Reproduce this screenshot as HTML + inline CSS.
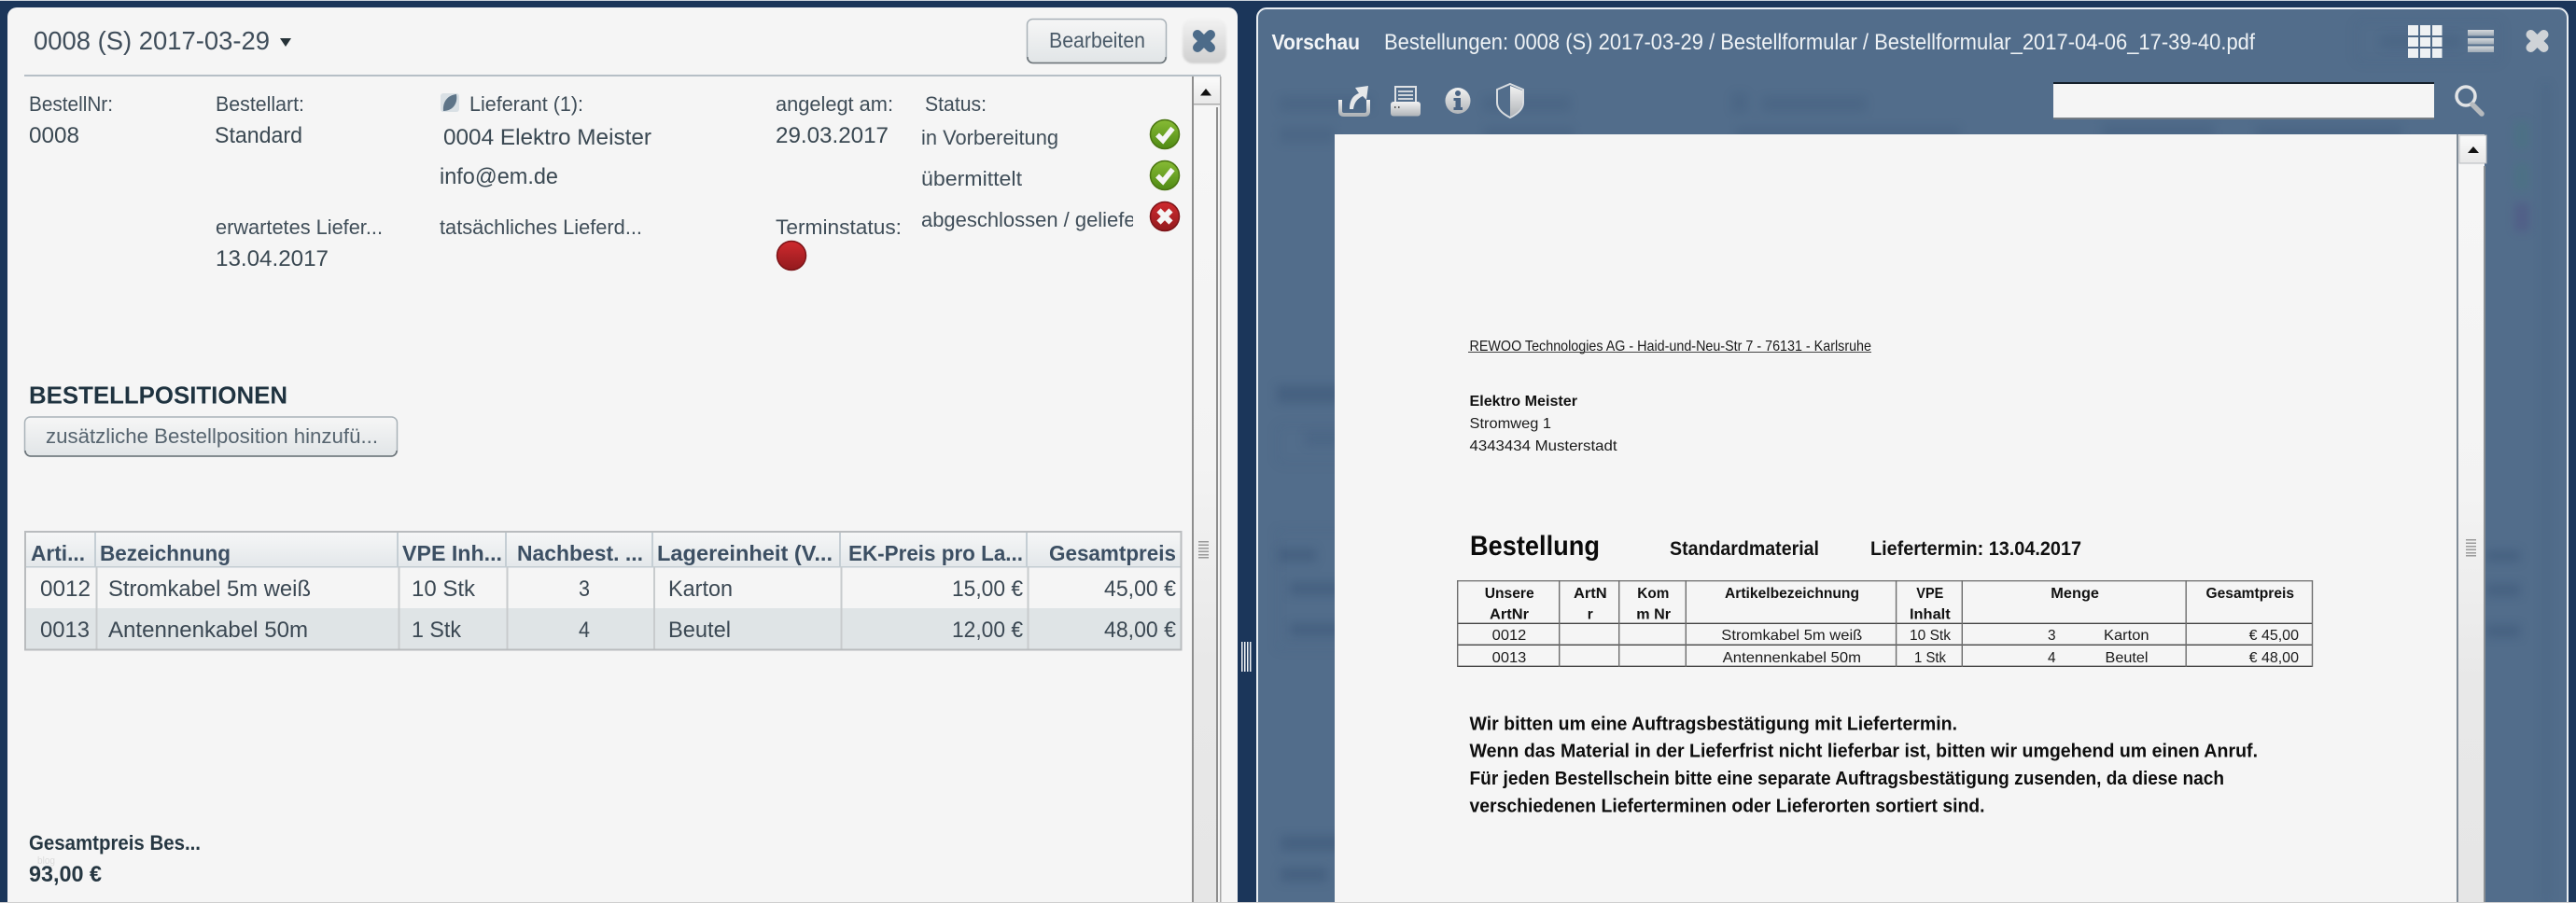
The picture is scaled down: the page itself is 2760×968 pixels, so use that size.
<!DOCTYPE html>
<html lang="de"><head><meta charset="utf-8"><title>Bestellung 0008</title>
<style>
html,body{margin:0;padding:0;width:2760px;height:968px;overflow:hidden;background:#1b365a}
svg{display:block}
text{font-family:"Liberation Sans",sans-serif;white-space:pre}
.l{font-size:22.500px;fill:#3f4d58}
.v{font-size:24.500px;fill:#3a4852}
.h{font-size:23.500px;font-weight:700;fill:#3c4f63}
.c{font-size:24.500px;fill:#3b4853}
.w{fill:#eef2f5;font-size:24px}
.p{font-size:16px;fill:#1a1a1a}
.pb{font-size:16px;fill:#111;font-weight:700}
.q{font-size:20px;fill:#0d0d0d;font-weight:700}
</style></head><body>
<svg xmlns="http://www.w3.org/2000/svg" width="2760" height="968" viewBox="0 0 2760 968">
<defs>
<linearGradient id="btn" x1="0" y1="0" x2="0" y2="1"><stop offset="0" stop-color="#f6f6f6"/><stop offset="1" stop-color="#e1e5e7"/></linearGradient>
<linearGradient id="cls" x1="0" y1="0" x2="0" y2="1"><stop offset="0" stop-color="#f2f2f2"/><stop offset="1" stop-color="#cfcfcf"/></linearGradient>
<linearGradient id="hd" x1="0" y1="0" x2="0" y2="1"><stop offset="0" stop-color="#f6f7f7"/><stop offset="1" stop-color="#e3e7ea"/></linearGradient>
<linearGradient id="gr" x1="0" y1="0" x2="0" y2="1"><stop offset="0" stop-color="#87bb35"/><stop offset="1" stop-color="#4f8a14"/></linearGradient>
<linearGradient id="rd" x1="0" y1="0" x2="0" y2="1"><stop offset="0" stop-color="#cf2a2e"/><stop offset="1" stop-color="#931a1e"/></linearGradient>
<linearGradient id="sc" x1="0" y1="0" x2="0" y2="1"><stop offset="0" stop-color="#f6f6f6"/><stop offset=".45" stop-color="#f3f3f3"/><stop offset=".7" stop-color="#e8e8e8"/><stop offset="1" stop-color="#e6e6e6"/></linearGradient>
<linearGradient id="ub" x1="0" y1="0" x2="0" y2="1"><stop offset="0" stop-color="#fafafa"/><stop offset="1" stop-color="#e8e8e8"/></linearGradient>
<linearGradient id="ic" x1="0" y1="0" x2="0" y2="1"><stop offset="0" stop-color="#f2f2f2"/><stop offset="1" stop-color="#b0b4b8"/></linearGradient>
<linearGradient id="bar" x1="0" y1="0" x2="0" y2="1"><stop offset="0" stop-color="#d6d9dc"/><stop offset="1" stop-color="#9eaab6"/></linearGradient>
<filter id="bl" filterUnits="userSpaceOnUse" x="1340" y="0" width="1420" height="968"><feGaussianBlur stdDeviation="5"/></filter>
<filter id="bs" x="-20%" y="-20%" width="140%" height="140%"><feGaussianBlur stdDeviation="1"/></filter>
<clipPath id="pc"><rect x="1348" y="10" width="1402" height="958" rx="10"/></clipPath>
<clipPath id="st"><rect x="985" y="210" width="229" height="50"/></clipPath>
</defs>

<rect width="2760" height="968" fill="#1b365a"/>
<rect width="2760" height="1" fill="#c9d2da"/>

<!-- left panel -->
<path d="M8 968V18a10 10 0 0 1 10-10H1316a10 10 0 0 1 10 10V968Z" fill="#f5f5f5"/>
<text x="36" y="53" font-size="27.500" fill="#3f4d5a" textLength="253" lengthAdjust="spacingAndGlyphs">0008 (S) 2017-03-29</text>
<path d="M300 41H312L306 50Z" fill="#263238"/>
<rect x="26" y="80" width="1282" height="2" fill="#b6bfc6"/>

<rect x="1100.500" y="20.500" width="149" height="47" rx="6" fill="url(#btn)" stroke="#a9b2b8" stroke-width="1.500"/>
<path d="M1101 61a6 6 0 0 0 6 6.500H1243a6 6 0 0 0 6-6.500" fill="none" stroke="#6c7479" stroke-width="1.500"/>
<text x="1124" y="51" font-size="23" fill="#4a5a68" textLength="103" lengthAdjust="spacingAndGlyphs">Bearbeiten</text>
<rect x="1267" y="20" width="47" height="48" rx="11" fill="url(#cls)" filter="url(#bs)"/>
<path d="M1282.900 37L1297 51.100M1297 37L1283 51" stroke="#4c6b89" stroke-width="10" stroke-linecap="round" fill="none"/>

<text class="l" x="31" y="119" textLength="90" lengthAdjust="spacingAndGlyphs">BestellNr:</text>
<text class="v" x="31" y="153" textLength="54" lengthAdjust="spacingAndGlyphs">0008</text>
<text class="l" x="231" y="119" textLength="95" lengthAdjust="spacingAndGlyphs">Bestellart:</text>
<text class="v" x="230" y="153" textLength="94" lengthAdjust="spacingAndGlyphs">Standard</text>
<rect x="472" y="100" width="20" height="20" rx="3" fill="#d9e0e5"/>
<path d="M489 101C479 102 474 110 475 119C484 119 491 112 489 101Z" fill="#5d7488"/>
<text class="l" x="503" y="119" textLength="122" lengthAdjust="spacingAndGlyphs">Lieferant (1):</text>
<text class="v" x="475" y="155" textLength="223" lengthAdjust="spacingAndGlyphs">0004 Elektro Meister</text>
<text class="v" x="471" y="197" textLength="127" lengthAdjust="spacingAndGlyphs">info@em.de</text>
<text class="l" x="231" y="251" textLength="179" lengthAdjust="spacingAndGlyphs">erwartetes Liefer...</text>
<text class="v" x="231" y="285" textLength="121" lengthAdjust="spacingAndGlyphs">13.04.2017</text>
<text class="l" x="471" y="251" textLength="217" lengthAdjust="spacingAndGlyphs">tatsächliches Lieferd...</text>
<text class="l" x="831" y="119" textLength="126" lengthAdjust="spacingAndGlyphs">angelegt am:</text>
<text class="v" x="831" y="153" textLength="121" lengthAdjust="spacingAndGlyphs">29.03.2017</text>
<text class="l" x="991" y="119" textLength="66" lengthAdjust="spacingAndGlyphs">Status:</text>
<text class="l" x="987" y="155" textLength="147" lengthAdjust="spacingAndGlyphs">in Vorbereitung</text>
<text class="l" x="987" y="199" textLength="108" lengthAdjust="spacingAndGlyphs">übermittelt</text>
<g clip-path="url(#st)"><text class="l" x="987" y="243" textLength="243" lengthAdjust="spacingAndGlyphs">abgeschlossen / geliefert</text></g>
<text class="l" x="831" y="251" textLength="135" lengthAdjust="spacingAndGlyphs">Terminstatus:</text>

<circle cx="1248" cy="144" r="15.500" fill="url(#gr)" stroke="#4a7412" stroke-width="1.500"/>
<path d="M1240 144.500L1246 150.500L1256.500 137.500" fill="none" stroke="#f5f5f5" stroke-width="5.500"/>
<circle cx="1248" cy="188" r="15.500" fill="url(#gr)" stroke="#4a7412" stroke-width="1.500"/>
<path d="M1240 188.500L1246 194.500L1256.500 181.500" fill="none" stroke="#f5f5f5" stroke-width="5.500"/>
<circle cx="1248" cy="232" r="15.500" fill="url(#rd)" stroke="#7c1418" stroke-width="1.500"/>
<path d="M1241.500 225.500L1254.500 238.500M1254.500 225.500L1241.500 238.500" fill="none" stroke="#f5f5f5" stroke-width="6"/>
<circle cx="848" cy="274" r="15.500" fill="url(#rd)" stroke="#7c1418" stroke-width="1.500"/>

<!-- left scrollbar -->
<rect x="1279" y="82" width="29" height="886" fill="#f5f5f5"/>
<path d="M1279 968V120a5 5 0 0 1 5-5H1299a4 4 0 0 1 4 4V968Z" fill="url(#sc)"/>
<rect x="1277" y="82" width="2" height="885" fill="#8e8e8e"/>
<rect x="1303" y="115" width="2" height="852" fill="#8e8e8e"/>
<rect x="1307" y="82" width="1.500" height="885" fill="#a8a8a8"/>
<rect x="1279" y="84" width="28" height="28" fill="url(#ub)"/>
<rect x="1279" y="111" width="28" height="1.500" fill="#aaa"/>
<path d="M1292 95L1298 102.500H1286Z" fill="#111"/>
<g fill="#9a9a9a"><rect x="1284" y="580" width="11" height="1.500"/><rect x="1284" y="583.500" width="11" height="1.500"/><rect x="1284" y="587" width="11" height="1.500"/><rect x="1284" y="590.500" width="11" height="1.500"/><rect x="1284" y="594" width="11" height="1.500"/><rect x="1284" y="597" width="11" height="1.500"/></g>

<text x="31" y="432.500" font-size="26" font-weight="700" fill="#1f3340" textLength="277" lengthAdjust="spacingAndGlyphs">BESTELLPOSITIONEN</text>
<rect x="26.500" y="447" width="399" height="42" rx="6" fill="url(#btn)" stroke="#a9b2b8" stroke-width="1.500"/>
<path d="M27 483a6 6 0 0 0 6 6H419a6 6 0 0 0 6-6" fill="none" stroke="#6c7479" stroke-width="1.500"/>
<text x="49" y="475" font-size="22.500" fill="#56646f" textLength="356" lengthAdjust="spacingAndGlyphs">zusätzliche Bestellposition hinzufü...</text>

<!-- table -->
<rect x="27" y="570" width="1238" height="38" fill="url(#hd)"/>
<rect x="27" y="652" width="1238" height="44" fill="#dfe4e6"/>
<rect x="27" y="607" width="1238" height="1.500" fill="#c3ccd2"/>
<g fill="#c5ced4"><rect x="101" y="570" width="2" height="37"/><rect x="425" y="570" width="2" height="37"/><rect x="541" y="570" width="2" height="37"/><rect x="698" y="570" width="2" height="37"/><rect x="899" y="570" width="2" height="37"/><rect x="1099" y="570" width="2" height="37"/></g>
<g fill="#c8cbcd"><rect x="102.500" y="608" width="2" height="88"/><rect x="426.500" y="608" width="2" height="88"/><rect x="542.500" y="608" width="2" height="88"/><rect x="700" y="608" width="2" height="88"/><rect x="900.500" y="608" width="2" height="88"/><rect x="1100.500" y="608" width="2" height="88"/></g>
<rect x="27" y="570" width="1238.500" height="126.500" fill="none" stroke="#b9bcbe" stroke-width="2"/>

<text class="h" x="33" y="601" textLength="58" lengthAdjust="spacingAndGlyphs">Arti...</text>
<text class="h" x="107" y="601" textLength="140" lengthAdjust="spacingAndGlyphs">Bezeichnung</text>
<text class="h" x="431" y="601" textLength="107" lengthAdjust="spacingAndGlyphs">VPE Inh...</text>
<text class="h" x="554" y="601" textLength="135" lengthAdjust="spacingAndGlyphs">Nachbest. ...</text>
<text class="h" x="704" y="601" textLength="188" lengthAdjust="spacingAndGlyphs">Lagereinheit (V...</text>
<text class="h" x="909" y="601" textLength="187" lengthAdjust="spacingAndGlyphs">EK-Preis pro La...</text>
<text class="h" x="1124" y="601" textLength="136" lengthAdjust="spacingAndGlyphs">Gesamtpreis</text>

<text class="c" x="43" y="639" textLength="54" lengthAdjust="spacingAndGlyphs">0012</text>
<text class="c" x="116" y="639" textLength="217" lengthAdjust="spacingAndGlyphs">Stromkabel 5m weiß</text>
<text class="c" x="441" y="639" textLength="68" lengthAdjust="spacingAndGlyphs">10 Stk</text>
<text class="c" x="620" y="639" textLength="12" lengthAdjust="spacingAndGlyphs">3</text>
<text class="c" x="716" y="639" textLength="69" lengthAdjust="spacingAndGlyphs">Karton</text>
<text class="c" x="1020" y="639" textLength="76" lengthAdjust="spacingAndGlyphs">15,00 €</text>
<text class="c" x="1183" y="639" textLength="77" lengthAdjust="spacingAndGlyphs">45,00 €</text>
<text class="c" x="43" y="683" textLength="53" lengthAdjust="spacingAndGlyphs">0013</text>
<text class="c" x="116" y="683" textLength="214" lengthAdjust="spacingAndGlyphs">Antennenkabel 50m</text>
<text class="c" x="441" y="683" textLength="53" lengthAdjust="spacingAndGlyphs">1 Stk</text>
<text class="c" x="620" y="683" textLength="12" lengthAdjust="spacingAndGlyphs">4</text>
<text class="c" x="716" y="683" textLength="67" lengthAdjust="spacingAndGlyphs">Beutel</text>
<text class="c" x="1020" y="683" textLength="76" lengthAdjust="spacingAndGlyphs">12,00 €</text>
<text class="c" x="1183" y="683" textLength="77" lengthAdjust="spacingAndGlyphs">48,00 €</text>

<text x="31" y="911" font-size="22" font-weight="700" fill="#263742" textLength="184" lengthAdjust="spacingAndGlyphs">Gesamtpreis Bes...</text>
<text x="40" y="926" font-size="11" fill="#dcdcdc" textLength="19" lengthAdjust="spacingAndGlyphs">blog</text>
<text x="31" y="945" font-size="24" font-weight="700" fill="#263742" textLength="78" lengthAdjust="spacingAndGlyphs">93,00 €</text>

<!-- divider grip -->
<g fill="#f2f4f6"><rect x="1330" y="688" width="1.500" height="32"/><rect x="1333" y="688" width="1.500" height="32"/><rect x="1336" y="688" width="1.500" height="32"/><rect x="1339" y="688" width="1.500" height="32"/></g>

<!-- right panel -->
<rect x="1347" y="9" width="1404" height="970" rx="10" fill="#526d8b" stroke="#e9eef2" stroke-width="2"/>

<!-- blurred shapes behind the panel -->
<g clip-path="url(#pc)">
<g filter="url(#bl)" fill="#3d5879" opacity=".3">
<rect x="1371" y="104" width="98" height="15"/><rect x="1371" y="136" width="58" height="17"/>
<rect x="1590" y="104" width="92" height="15"/><rect x="1590" y="136" width="96" height="17"/>
<rect x="1856" y="100" width="16" height="20"/><rect x="1889" y="104" width="110" height="15"/><rect x="1860" y="136" width="240" height="17"/>
<rect x="2252" y="133" width="120" height="18"/><rect x="2417" y="134" width="156" height="18"/>
<rect x="2551" y="38" width="85" height="13"/>
<rect x="2694" y="130" width="16" height="30" fill="#3f7a78"/><rect x="2694" y="174" width="16" height="30" fill="#3f7a78"/><rect x="2694" y="218" width="16" height="30" fill="#4f4080"/>
</g>
<g filter="url(#bl)" fill="#3d5879" opacity=".55">
<rect x="1368" y="413" width="70" height="19"/><rect x="1398" y="463" width="40" height="15" opacity=".5"/>
<rect x="1370" y="588" width="40" height="14"/><rect x="1382" y="624" width="60" height="14"/><rect x="1382" y="668" width="60" height="14"/>
<rect x="2664" y="590" width="36" height="12"/><rect x="2664" y="626" width="36" height="13"/><rect x="2664" y="670" width="36" height="13"/>
<rect x="1372" y="896" width="70" height="16"/><rect x="1372" y="930" width="50" height="15"/>
<rect x="2724" y="90" width="8" height="878" opacity=".35"/>
</g>
<g filter="url(#bl)" fill="none" stroke="#46607f" stroke-width="2" opacity=".3">
<rect x="2524" y="22" width="156" height="45" rx="6"/>
<rect x="1368" y="455" width="120" height="42" rx="6"/>
<rect x="1368" y="568" width="120" height="128"/>
</g></g>

<text x="1362.500" y="53" font-size="23.500" font-weight="700" fill="#f3f5f7" textLength="94.500" lengthAdjust="spacingAndGlyphs">Vorschau</text>
<text class="w" x="1483" y="53" textLength="933" lengthAdjust="spacingAndGlyphs">Bestellungen: 0008 (S) 2017-03-29 / Bestellformular / Bestellformular_2017-04-06_17-39-40.pdf</text>

<!-- toolbar icons -->
<path d="M1436 107V119Q1436 123 1440 123H1462Q1466 123 1466 119V107" fill="none" stroke="url(#ic)" stroke-width="4"/>
<path d="M1446 117C1446 107 1450 102 1456 100L1452 94L1466 92L1464 107L1460 103C1454 106 1451 110 1450 117Z" fill="#e6e8ea"/>
<rect x="1495" y="93" width="22" height="18" fill="#526d8b" stroke="#dfe2e5" stroke-width="2"/>
<path d="M1498 98H1514M1498 102H1514M1498 106H1514" stroke="#dfe2e5" stroke-width="1.800"/>
<rect x="1490" y="109" width="32" height="15.500" rx="3" fill="url(#ic)"/>
<rect x="1494" y="114" width="1.500" height="2" fill="#555"/><rect x="1498" y="114" width="1.500" height="2" fill="#555"/>
<ellipse cx="1562" cy="108" rx="13.500" ry="14" fill="url(#ic)"/>
<circle cx="1562" cy="100" r="3" fill="#4a6484"/>
<path d="M1557.500 105H1565V115H1567V118H1557.500V115H1559.500V108H1557.500Z" fill="#4a6484"/>
<path d="M1618 90L1632 96V110C1632 118 1624 123 1618 126C1612 123 1604 118 1604 110V96Z" fill="#526d8b" stroke="#d8dce0" stroke-width="2"/>
<path d="M1618 92L1631 97V110C1631 117 1624 122 1618 125Z" fill="url(#ic)"/>

<rect x="2200" y="88" width="408" height="40" fill="#f5f5f5"/>
<rect x="2200" y="88" width="408" height="2" fill="#15202b"/>
<rect x="2200" y="126" width="408" height="2" fill="#747c84"/>
<circle cx="2642" cy="103" r="10" fill="none" stroke="#e2e4e6" stroke-width="3.500"/>
<path d="M2649 112L2659 122" stroke="#b6babe" stroke-width="5.500" stroke-linecap="round"/>

<g fill="#eef1f3"><rect x="2580" y="27" width="11" height="11"/><rect x="2593" y="27" width="11" height="11"/><rect x="2606" y="27" width="10.500" height="11"/><rect x="2580" y="40" width="11" height="10"/><rect x="2593" y="40" width="11" height="10"/><rect x="2606" y="40" width="10.500" height="10"/><rect x="2580" y="52" width="11" height="10"/><rect x="2593" y="52" width="11" height="10"/><rect x="2606" y="52" width="10.500" height="10"/></g>
<rect x="2644" y="32" width="28" height="6.500" fill="url(#bar)"/><rect x="2644" y="41" width="28" height="6.500" fill="url(#bar)"/><rect x="2644" y="49.500" width="28" height="6.500" fill="url(#bar)"/>
<path d="M2711.500 37L2725.500 51M2725.500 37L2711.500 51" stroke="#cfd3d7" stroke-width="10" stroke-linecap="round" fill="none"/>

<!-- pdf page -->
<rect x="1430" y="144" width="1202" height="824" fill="#f5f5f5"/>
<rect x="2632" y="144" width="2" height="824" fill="#7f8b97"/>
<rect x="2634" y="144" width="28" height="824" fill="#f5f5f5"/>
<path d="M2634 968V180a3 3 0 0 1 3-3H2658a3 3 0 0 1 3 3V968Z" fill="url(#sc)"/>
<rect x="2661" y="178" width="2" height="790" fill="#8b8f93"/>
<rect x="2635" y="145" width="29" height="30" fill="url(#ub)" stroke="#b5b9bd" stroke-width="1"/>
<path d="M2650 157L2656 164H2644Z" fill="#111"/>
<g fill="#9a9a9a"><rect x="2642" y="578" width="11" height="1.500"/><rect x="2642" y="581.500" width="11" height="1.500"/><rect x="2642" y="585" width="11" height="1.500"/><rect x="2642" y="588.500" width="11" height="1.500"/><rect x="2642" y="592" width="11" height="1.500"/><rect x="2642" y="595" width="11" height="1.500"/></g>

<text class="p" x="1574.500" y="376" textLength="430.500" lengthAdjust="spacingAndGlyphs">REWOO Technologies AG - Haid-und-Neu-Str 7 - 76131 - Karlsruhe</text>
<rect x="1573" y="377" width="432" height="1" fill="#444"/>
<text class="pb" x="1574.500" y="435" textLength="115.500" lengthAdjust="spacingAndGlyphs">Elektro Meister</text>
<text class="p" x="1574.500" y="459" textLength="87.500" lengthAdjust="spacingAndGlyphs">Stromweg 1</text>
<text class="p" x="1574.500" y="483" textLength="158" lengthAdjust="spacingAndGlyphs">4343434 Musterstadt</text>
<text x="1575" y="595" font-size="30" font-weight="700" fill="#0a0a0a" textLength="139" lengthAdjust="spacingAndGlyphs">Bestellung</text>
<text x="1789" y="595" font-size="21" font-weight="700" fill="#111" textLength="160" lengthAdjust="spacingAndGlyphs">Standardmaterial</text>
<text x="2004" y="595" font-size="21" font-weight="700" fill="#111" textLength="226" lengthAdjust="spacingAndGlyphs">Liefertermin: 13.04.2017</text>

<!-- pdf table -->
<g fill="none" stroke-width="1.400">
<path d="M1561.700 622.700H2477.500" stroke="#777"/>
<path d="M1561.700 668.300H2477.500M1561.700 691.300H2477.500M1561.700 714.300H2477.500" stroke="#444"/>
<path d="M1561.700 622V715M1670.700 622V715M1734.700 622V715M1806.300 622V715M2031.600 622V715M2102.300 622V715M2342.200 622V715M2477.500 622V715" stroke="#6c6c6c"/>
</g>
<text class="pb" x="1590.700" y="641" textLength="53" lengthAdjust="spacingAndGlyphs">Unsere</text>
<text class="pb" x="1596" y="663.300" textLength="42" lengthAdjust="spacingAndGlyphs">ArtNr</text>
<text class="pb" x="1686" y="641" textLength="35.700" lengthAdjust="spacingAndGlyphs">ArtN</text>
<text class="pb" x="1700.700" y="663.300" textLength="6" lengthAdjust="spacingAndGlyphs">r</text>
<text class="pb" x="1754.300" y="641" textLength="34" lengthAdjust="spacingAndGlyphs">Kom</text>
<text class="pb" x="1753.300" y="663.300" textLength="36.700" lengthAdjust="spacingAndGlyphs">m Nr</text>
<text class="pb" x="1848" y="641" textLength="144" lengthAdjust="spacingAndGlyphs">Artikelbezeichnung</text>
<text class="pb" x="2053.300" y="641" textLength="29" lengthAdjust="spacingAndGlyphs">VPE</text>
<text class="pb" x="2046" y="663.300" textLength="43.700" lengthAdjust="spacingAndGlyphs">Inhalt</text>
<text class="pb" x="2197.300" y="641" textLength="51.700" lengthAdjust="spacingAndGlyphs">Menge</text>
<text class="pb" x="2363.500" y="641" textLength="94.500" lengthAdjust="spacingAndGlyphs">Gesamtpreis</text>
<text class="p" x="1598.700" y="686" textLength="36.600" lengthAdjust="spacingAndGlyphs">0012</text>
<text class="p" x="1844.300" y="686" textLength="151" lengthAdjust="spacingAndGlyphs">Stromkabel 5m weiß</text>
<text class="p" x="2046" y="686" textLength="44" lengthAdjust="spacingAndGlyphs">10 Stk</text>
<text class="p" x="2194" y="686" textLength="8.600" lengthAdjust="spacingAndGlyphs">3</text>
<text class="p" x="2254" y="686" textLength="48.500" lengthAdjust="spacingAndGlyphs">Karton</text>
<text class="p" x="2409.600" y="686" textLength="53.400" lengthAdjust="spacingAndGlyphs">€ 45,00</text>
<text class="p" x="1598.700" y="710" textLength="36.600" lengthAdjust="spacingAndGlyphs">0013</text>
<text class="p" x="1845.700" y="710" textLength="148.300" lengthAdjust="spacingAndGlyphs">Antennenkabel 50m</text>
<text class="p" x="2051" y="710" textLength="34" lengthAdjust="spacingAndGlyphs">1 Stk</text>
<text class="p" x="2194" y="710" textLength="8.600" lengthAdjust="spacingAndGlyphs">4</text>
<text class="p" x="2255.500" y="710" textLength="46" lengthAdjust="spacingAndGlyphs">Beutel</text>
<text class="p" x="2409.600" y="710" textLength="53.400" lengthAdjust="spacingAndGlyphs">€ 48,00</text>

<text class="q" x="1574.500" y="782.300" textLength="522.500" lengthAdjust="spacingAndGlyphs">Wir bitten um eine Auftragsbestätigung mit Liefertermin.</text>
<text class="q" x="1574.500" y="811.700" textLength="844.500" lengthAdjust="spacingAndGlyphs">Wenn das Material in der Lieferfrist nicht lieferbar ist, bitten wir umgehend um einen Anruf.</text>
<text class="q" x="1574.500" y="841" textLength="808.500" lengthAdjust="spacingAndGlyphs">Für jeden Bestellschein bitte eine separate Auftragsbestätigung zusenden, da diese nach</text>
<text class="q" x="1574.500" y="870.700" textLength="552" lengthAdjust="spacingAndGlyphs">verschiedenen Lieferterminen oder Lieferorten sortiert sind.</text>

<rect x="0" y="967" width="2760" height="1" fill="#cfcfcf"/>
</svg>
</body></html>
